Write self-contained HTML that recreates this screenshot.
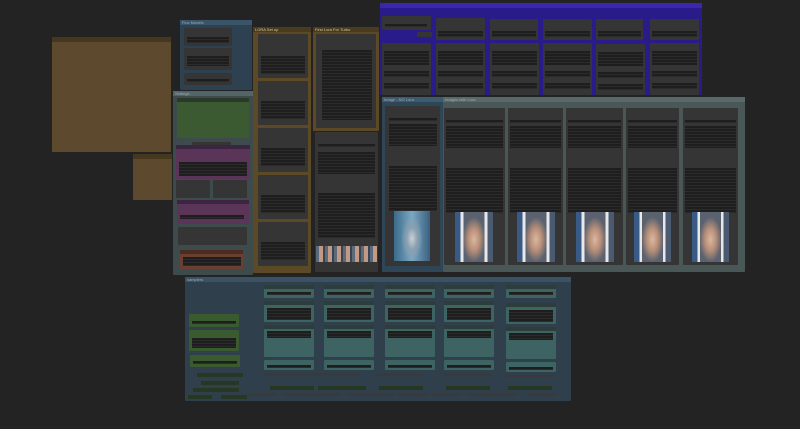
<!DOCTYPE html>
<html><head><meta charset="utf-8"><style>
*{margin:0;padding:0;box-sizing:border-box}
body{width:800px;height:429px;background:#232323;position:relative;overflow:hidden;font-family:"Liberation Sans",sans-serif}
div{position:absolute}
.g{border-radius:1px}
.h{left:0;right:0;top:0;height:5px;font-size:4px;color:#9ab;line-height:5px;padding-left:2px;white-space:nowrap}
.n{background:#353535;border-radius:1px}
.t{left:0;right:0;top:0;height:4px;background:#2c2c2c}
.w{background:repeating-linear-gradient(#1e1e1e 0 2px,#2b2b2b 2px 3px);height:2px}
.img{background:radial-gradient(ellipse 30% 45% at 50% 55%,#d9b8a2 0%,#b98f78 50%,rgba(0,0,0,0) 100%),linear-gradient(90deg,#3a5a86 0 15%,#e8e8ea 15% 22%,#5a6270 22% 78%,#e8e8ea 78% 85%,#4a5a70 85%)}
.sb{background:#263822;height:4px}
.sg{background:#3a3a3a;height:3px}
</style></head><body>

<div class="g" style="left:52px;top:37px;width:119px;height:115px;background:#5d4a2e"><div class="h" style="background:#46371f"></div></div>
<div class="g" style="left:133px;top:154px;width:39px;height:46px;background:#5d4a2e"><div class="h" style="background:#46371f"></div></div>

<div class="g" style="left:180px;top:20px;width:72px;height:70px;background:#2e4150"><div class="h" style="background:#3a5568">Flux Models</div>
 <div class="n" style="left:4px;top:8px;width:48px;height:18px"><div class="w" style="left:3px;top:9px;width:42px;height:6px"></div></div>
 <div class="n" style="left:4px;top:28px;width:48px;height:22px"><div class="w" style="left:3px;top:8px;width:42px;height:10px"></div></div>
 <div class="n" style="left:4px;top:53px;width:48px;height:12px"><div class="w" style="left:3px;top:6px;width:42px;height:3px"></div></div>
</div>

<div class="g" style="left:173px;top:91px;width:80px;height:184px;background:#3e4b4d"><div class="h" style="background:#536567">Settings</div>
 <div class="n" style="left:4px;top:7px;width:72px;height:40px;background:#3c5a32"><div class="t" style="background:#2b3a26"></div></div>
 <div class="n" style="left:19px;top:51px;width:39px;height:3px"></div>
 <div class="n" style="left:3px;top:54px;width:74px;height:34px;background:#5a3558"><div class="t" style="background:#3c2540"></div><div class="w" style="left:3px;top:17px;width:68px;height:14px"></div></div>
 <div class="n" style="left:3px;top:89px;width:34px;height:18px"></div>
 <div class="n" style="left:40px;top:89px;width:34px;height:18px"></div>
 <div class="n" style="left:4px;top:109px;width:72px;height:24px;background:#5a3558"><div class="t" style="background:#3c2540"></div><div class="w" style="left:3px;top:15px;width:64px;height:4px"></div></div>
 <div class="n" style="left:5px;top:136px;width:69px;height:18px"></div>
 <div class="n" style="left:7px;top:159px;width:63px;height:19px;background:#6a3e30"><div class="t" style="background:#4a2c22"></div><div class="w" style="left:3px;top:7px;width:58px;height:9px"></div></div>
</div>

<div class="g" style="left:253px;top:27px;width:58px;height:246px;background:#5c4a27"><div class="h" style="background:#4a3b1e;color:#cc9">LORA Set up</div>
 <div class="n" style="left:5px;top:7px;width:50px;height:44px"><div class="w" style="left:3px;top:22px;width:44px;height:18px"></div></div>
 <div class="n" style="left:5px;top:54px;width:50px;height:44px"><div class="w" style="left:3px;top:20px;width:44px;height:18px"></div></div>
 <div class="n" style="left:5px;top:101px;width:50px;height:44px"><div class="w" style="left:3px;top:20px;width:44px;height:18px"></div></div>
 <div class="n" style="left:5px;top:148px;width:50px;height:44px"><div class="w" style="left:3px;top:20px;width:44px;height:18px"></div></div>
 <div class="n" style="left:5px;top:195px;width:50px;height:44px"><div class="w" style="left:3px;top:20px;width:44px;height:18px"></div></div>
</div>

<div class="g" style="left:313px;top:27px;width:66px;height:104px;background:#5c4a27"><div class="h" style="background:#4a3b1e;color:#cc9">First Lora For Turbo</div>
 <div class="n" style="left:3px;top:7px;width:60px;height:94px"><div class="w" style="left:6px;top:16px;width:50px;height:70px"></div></div>
</div>
<div class="n" style="left:315px;top:132px;width:63px;height:140px"><div class="w" style="left:3px;top:12px;width:57px;height:3px"></div><div class="w" style="left:3px;top:20px;width:57px;height:22px"></div><div class="w" style="left:3px;top:61px;width:57px;height:45px"></div>
 <div class="img" style="left:1px;top:114px;width:61px;height:16px;background:repeating-linear-gradient(90deg,#5a6a7a 0 3px,#c09a84 3px 7px,#3a4450 7px 9px)"></div></div>

<div class="g" style="left:380px;top:3px;width:322px;height:92px;background:#2a1b8a"><div class="h" style="background:#3a26b0"></div>
 <div class="n" style="left:2px;top:13px;width:49px;height:14px"><div class="w" style="left:3px;top:8px;width:42px;height:3px"></div></div>
 <div class="n" style="left:37px;top:29px;width:15px;height:5px"></div>
 <div class="n" style="left:56px;top:15px;width:49px;height:22px"><div class="w" style="left:2px;top:13px;width:45px;height:6px"></div></div>
 <div class="n" style="left:110px;top:16px;width:48px;height:21px"><div class="w" style="left:2px;top:12px;width:44px;height:6px"></div></div>
 <div class="n" style="left:163px;top:16px;width:49px;height:21px"><div class="w" style="left:2px;top:12px;width:45px;height:6px"></div></div>
 <div class="n" style="left:216px;top:16px;width:47px;height:21px"><div class="w" style="left:2px;top:12px;width:43px;height:6px"></div></div>
 <div class="n" style="left:270px;top:16px;width:49px;height:21px"><div class="w" style="left:2px;top:12px;width:45px;height:6px"></div></div>
 <div class="n" style="left:2px;top:40px;width:49px;height:52px"><div class="w" style="left:2px;top:8px;width:45px;height:14px"></div><div class="w" style="left:2px;top:28px;width:45px;height:6px"></div><div class="w" style="left:2px;top:40px;width:45px;height:6px"></div></div>
 <div class="n" style="left:56px;top:40px;width:49px;height:52px"><div class="w" style="left:2px;top:8px;width:45px;height:14px"></div><div class="w" style="left:2px;top:28px;width:45px;height:6px"></div><div class="w" style="left:2px;top:40px;width:45px;height:6px"></div></div>
 <div class="n" style="left:110px;top:40px;width:49px;height:52px"><div class="w" style="left:2px;top:8px;width:45px;height:14px"></div><div class="w" style="left:2px;top:28px;width:45px;height:6px"></div><div class="w" style="left:2px;top:40px;width:45px;height:6px"></div></div>
 <div class="n" style="left:163px;top:40px;width:49px;height:52px"><div class="w" style="left:2px;top:8px;width:45px;height:14px"></div><div class="w" style="left:2px;top:28px;width:45px;height:6px"></div><div class="w" style="left:2px;top:40px;width:45px;height:6px"></div></div>
 <div class="n" style="left:216px;top:41px;width:49px;height:51px"><div class="w" style="left:2px;top:8px;width:45px;height:14px"></div><div class="w" style="left:2px;top:28px;width:45px;height:6px"></div><div class="w" style="left:2px;top:40px;width:45px;height:6px"></div></div>
 <div class="n" style="left:270px;top:40px;width:49px;height:52px"><div class="w" style="left:2px;top:8px;width:45px;height:14px"></div><div class="w" style="left:2px;top:28px;width:45px;height:6px"></div><div class="w" style="left:2px;top:40px;width:45px;height:6px"></div></div>
</div>

<div class="g" style="left:382px;top:97px;width:61px;height:175px;background:#2f4656"><div class="h" style="background:#3c5a70">Image - NO Lora</div>
 <div class="n" style="left:3px;top:9px;width:55px;height:160px"><div class="w" style="left:4px;top:12px;width:48px;height:3px"></div><div class="w" style="left:4px;top:18px;width:48px;height:22px"></div><div class="w" style="left:4px;top:60px;width:48px;height:45px"></div>
 <div class="img" style="left:9px;top:105px;width:36px;height:50px;background:radial-gradient(ellipse 30% 45% at 50% 55%,#c8d0d8 0%,#8aa0b0 50%,rgba(0,0,0,0) 100%),linear-gradient(90deg,#3a6a8a,#7aa8c4 50%,#3a6080)"></div></div>
</div>

<div class="g" style="left:443px;top:97px;width:302px;height:175px;background:#4a5757"><div class="h" style="background:#596868">Images with Lora</div></div>
<div class="n" style="left:444px;top:108px;width:61px;height:157px"><div class="w" style="left:2px;top:12px;width:57px;height:3px"></div><div class="w" style="left:2px;top:18px;width:57px;height:22px"></div><div class="w" style="left:2px;top:60px;width:57px;height:45px"></div><div class="img" style="left:11px;top:104px;width:38px;height:50px"></div></div>
<div class="n" style="left:508px;top:108px;width:55px;height:157px"><div class="w" style="left:2px;top:12px;width:51px;height:3px"></div><div class="w" style="left:2px;top:18px;width:51px;height:22px"></div><div class="w" style="left:2px;top:60px;width:51px;height:45px"></div><div class="img" style="left:9px;top:104px;width:38px;height:50px"></div></div>
<div class="n" style="left:566px;top:108px;width:57px;height:157px"><div class="w" style="left:2px;top:12px;width:53px;height:3px"></div><div class="w" style="left:2px;top:18px;width:53px;height:22px"></div><div class="w" style="left:2px;top:60px;width:53px;height:45px"></div><div class="img" style="left:10px;top:104px;width:38px;height:50px"></div></div>
<div class="n" style="left:626px;top:108px;width:53px;height:157px"><div class="w" style="left:2px;top:12px;width:49px;height:3px"></div><div class="w" style="left:2px;top:18px;width:49px;height:22px"></div><div class="w" style="left:2px;top:60px;width:49px;height:45px"></div><div class="img" style="left:8px;top:104px;width:37px;height:50px"></div></div>
<div class="n" style="left:683px;top:108px;width:55px;height:157px"><div class="w" style="left:2px;top:12px;width:51px;height:3px"></div><div class="w" style="left:2px;top:18px;width:51px;height:22px"></div><div class="w" style="left:2px;top:60px;width:51px;height:45px"></div><div class="img" style="left:9px;top:104px;width:37px;height:50px"></div></div>

<div class="g" style="left:185px;top:277px;width:386px;height:124px;background:#2f3f4c"><div class="h" style="background:#3a5264">samplers</div>
 <div class="n" style="left:4px;top:37px;width:50px;height:13px;background:#3a5a30"><div class="w" style="left:3px;top:7px;width:44px;height:3px"></div></div>
 <div class="n" style="left:4px;top:53px;width:50px;height:21px;background:#3a5a30"><div class="w" style="left:3px;top:8px;width:44px;height:10px"></div></div>
 <div class="n" style="left:5px;top:78px;width:50px;height:12px;background:#3a5a30"><div class="w" style="left:3px;top:6px;width:44px;height:3px"></div></div>
 <div class="sb" style="left:12px;top:96px;width:46px"></div>
 <div class="sb" style="left:16px;top:104px;width:38px"></div>
 <div class="sb" style="left:8px;top:111px;width:46px"></div>
 <div class="sb" style="left:3px;top:118px;width:24px"></div>
 <div class="sb" style="left:36px;top:118px;width:26px"></div>
</div>
<div style="left:264px;top:285px;width:50px;height:110px">
 <div class="n" style="left:0;top:0;width:50px;height:13px;background:#3d6462"><div class="t" style="background:#2d3d3a"></div><div class="w" style="left:3px;top:7px;width:44px;height:3px"></div></div>
 <div class="n" style="left:0;top:16px;width:50px;height:21px;background:#3d6462"><div class="t" style="background:#2d3d3a"></div><div class="w" style="left:3px;top:7px;width:44px;height:12px"></div></div>
 <div class="n" style="left:0;top:40px;width:50px;height:32px;background:#3d6462"><div class="t" style="background:#2d3d3a"></div><div class="w" style="left:3px;top:6px;width:44px;height:7px"></div></div>
 <div class="n" style="left:0;top:75px;width:50px;height:10px;background:#3d6462"><div class="w" style="left:3px;top:5px;width:44px;height:3px"></div></div>
 <div class="sg" style="left:0;top:88px;width:48px"></div><div class="sb" style="left:6px;top:101px;width:44px"></div><div class="sg" style="left:-18px;top:108px;width:30px"></div><div class="sg" style="left:18px;top:108px;width:30px"></div>
</div>
<div style="left:324px;top:285px;width:50px;height:110px">
 <div class="n" style="left:0;top:0;width:50px;height:13px;background:#3d6462"><div class="t" style="background:#2d3d3a"></div><div class="w" style="left:3px;top:7px;width:44px;height:3px"></div></div>
 <div class="n" style="left:0;top:16px;width:50px;height:21px;background:#3d6462"><div class="t" style="background:#2d3d3a"></div><div class="w" style="left:3px;top:7px;width:44px;height:12px"></div></div>
 <div class="n" style="left:0;top:40px;width:50px;height:32px;background:#3d6462"><div class="t" style="background:#2d3d3a"></div><div class="w" style="left:3px;top:6px;width:44px;height:7px"></div></div>
 <div class="n" style="left:0;top:75px;width:50px;height:10px;background:#3d6462"><div class="w" style="left:3px;top:5px;width:44px;height:3px"></div></div>
 <div class="sg" style="left:-12px;top:88px;width:48px"></div><div class="sb" style="left:-6px;top:101px;width:48px"></div><div class="sg" style="left:-14px;top:108px;width:30px"></div><div class="sg" style="left:22px;top:108px;width:30px"></div>
</div>
<div style="left:385px;top:285px;width:50px;height:110px">
 <div class="n" style="left:0;top:0;width:50px;height:13px;background:#3d6462"><div class="t" style="background:#2d3d3a"></div><div class="w" style="left:3px;top:7px;width:44px;height:3px"></div></div>
 <div class="n" style="left:0;top:16px;width:50px;height:21px;background:#3d6462"><div class="t" style="background:#2d3d3a"></div><div class="w" style="left:3px;top:7px;width:44px;height:12px"></div></div>
 <div class="n" style="left:0;top:40px;width:50px;height:32px;background:#3d6462"><div class="t" style="background:#2d3d3a"></div><div class="w" style="left:3px;top:6px;width:44px;height:7px"></div></div>
 <div class="n" style="left:0;top:75px;width:50px;height:10px;background:#3d6462"><div class="w" style="left:3px;top:5px;width:44px;height:3px"></div></div>
 <div class="sg" style="left:-10px;top:88px;width:48px"></div><div class="sb" style="left:-6px;top:101px;width:44px"></div><div class="sg" style="left:-20px;top:108px;width:30px"></div><div class="sg" style="left:14px;top:108px;width:30px"></div>
</div>
<div style="left:444px;top:285px;width:50px;height:110px">
 <div class="n" style="left:0;top:0;width:50px;height:13px;background:#3d6462"><div class="t" style="background:#2d3d3a"></div><div class="w" style="left:3px;top:7px;width:44px;height:3px"></div></div>
 <div class="n" style="left:0;top:16px;width:50px;height:21px;background:#3d6462"><div class="t" style="background:#2d3d3a"></div><div class="w" style="left:3px;top:7px;width:44px;height:12px"></div></div>
 <div class="n" style="left:0;top:40px;width:50px;height:32px;background:#3d6462"><div class="t" style="background:#2d3d3a"></div><div class="w" style="left:3px;top:6px;width:44px;height:7px"></div></div>
 <div class="n" style="left:0;top:75px;width:50px;height:10px;background:#3d6462"><div class="w" style="left:3px;top:5px;width:44px;height:3px"></div></div>
 <div class="sg" style="left:0;top:88px;width:48px"></div><div class="sb" style="left:2px;top:101px;width:44px"></div><div class="sg" style="left:-12px;top:108px;width:30px"></div><div class="sg" style="left:22px;top:108px;width:30px"></div>
</div>
<div style="left:506px;top:285px;width:50px;height:110px">
 <div class="n" style="left:0;top:0;width:50px;height:13px;background:#3d6462"><div class="t" style="background:#2d3d3a"></div><div class="w" style="left:3px;top:7px;width:44px;height:3px"></div></div>
 <div class="n" style="left:0;top:18px;width:50px;height:21px;background:#3d6462"><div class="t" style="background:#2d3d3a"></div><div class="w" style="left:3px;top:7px;width:44px;height:12px"></div></div>
 <div class="n" style="left:0;top:42px;width:50px;height:32px;background:#3d6462"><div class="t" style="background:#2d3d3a"></div><div class="w" style="left:3px;top:6px;width:44px;height:7px"></div></div>
 <div class="n" style="left:0;top:77px;width:50px;height:10px;background:#3d6462"><div class="w" style="left:3px;top:5px;width:44px;height:3px"></div></div>
 <div class="sg" style="left:0;top:90px;width:48px"></div><div class="sb" style="left:2px;top:101px;width:44px"></div><div class="sg" style="left:-18px;top:108px;width:30px"></div><div class="sg" style="left:22px;top:108px;width:30px"></div>
</div>
</body></html>
